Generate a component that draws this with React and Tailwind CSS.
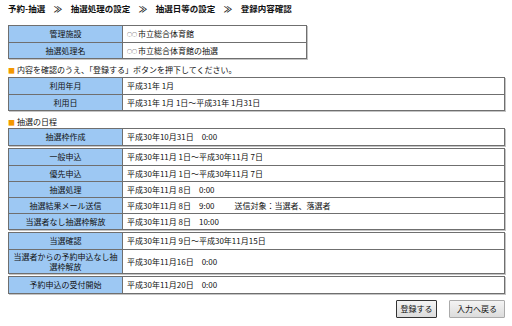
import React from "react";

const font = { fontFamily: '"Noto Sans CJK JP", "Noto Sans", sans-serif' };

function Row({ label, children, first, tall }) {
  return (
    <div className={`flex ${first ? "" : "border-t border-[#6f6f6f]"} ${tall ? "h-[24px]" : "h-[16px]"}`}>
      <div className="w-[114px] shrink-0 bg-[#9dc8f3] border-r border-[#6f6f6f] flex items-center justify-center text-center leading-[10px] px-[2px]">
        {label}
      </div>
      <div className="flex-1 flex items-center pl-[4px] whitespace-pre bg-white">{children}</div>
    </div>
  );
}

function Table({ children, className = "" }) {
  return (
    <div className={`border border-[#6f6f6f] shadow-[1px_1px_0_#c4c4c4] ${className}`}>{children}</div>
  );
}

const Circles = () => <span className="text-[5px] tracking-[0px] mr-[1px]">○○</span>;

export default function App() {
  return (
    <div className="w-[512px] h-[326px] bg-white text-[8px] text-[#111] overflow-hidden" style={font}>
      <div className="pl-[8px] pt-[3px] h-[25px] font-bold text-[8.5px] leading-[10px] whitespace-pre">
        予約-抽選　≫　抽選処理の設定　≫　抽選日等の設定　≫　登録内容確認
      </div>
      <div className="pl-[8px]">
        <Table className="w-[299px]">
          <Row label="管理施設" first><Circles />市立総合体育館</Row>
          <Row label="抽選処理名"><Circles />市立総合体育館の抽選</Row>
        </Table>
        <div className="flex items-center h-[18px] pt-[3px] leading-[10px]">
          <span className="text-[#f39800] mr-[2px] text-[7px]">■</span>
          内容を確認のうえ、「登録する」ボタンを押下してください。
        </div>
        <Table className="w-[497px]">
          <Row label="利用年月" first>平成31年 1月</Row>
          <Row label="利用日">平成31年 1月 1日～平成31年 1月31日</Row>
        </Table>
        <div className="flex items-center h-[17px] pt-[5px] leading-[10px]">
          <span className="text-[#f39800] mr-[2px] text-[7px]">■</span>
          抽選の日程
        </div>
        <div className="flex flex-col gap-[2px] w-[497px]">
          <Table>
            <Row label="抽選枠作成" first>平成30年10月31日　0:00</Row>
          </Table>
          <Table>
            <Row label="一般申込" first>平成30年11月 1日～平成30年11月 7日</Row>
            <Row label="優先申込">平成30年11月 1日～平成30年11月 7日</Row>
            <Row label="抽選処理">平成30年11月 8日　0:00</Row>
            <Row label="抽選結果メール送信">
              平成30年11月 8日　9:00<span className="ml-[20px]">送信対象：当選者、落選者</span>
            </Row>
            <Row label="当選者なし抽選枠解放">平成30年11月 8日　10:00</Row>
          </Table>
          <Table>
            <Row label="当選確認" first>平成30年11月 9日～平成30年11月15日</Row>
            <Row label="当選者からの予約申込なし抽選枠解放" tall>平成30年11月16日　0:00</Row>
          </Table>
          <Table>
            <Row label="予約申込の受付開始" first>平成30年11月20日　0:00</Row>
          </Table>
        </div>
        <div className="flex justify-end gap-[12px] w-[497px] mt-[6px]">
          <button className="w-[41px] h-[18px] border border-[#333] bg-gradient-to-b from-[#f4f4f4] to-[#dcdcdc] text-[8px] rounded-[1px]">
            登録する
          </button>
          <button className="w-[56px] h-[18px] border border-[#aaa] bg-gradient-to-b from-[#f4f4f4] to-[#dcdcdc] text-[8px] rounded-[1px]">
            入力へ戻る
          </button>
        </div>
      </div>
    </div>
  );
}
